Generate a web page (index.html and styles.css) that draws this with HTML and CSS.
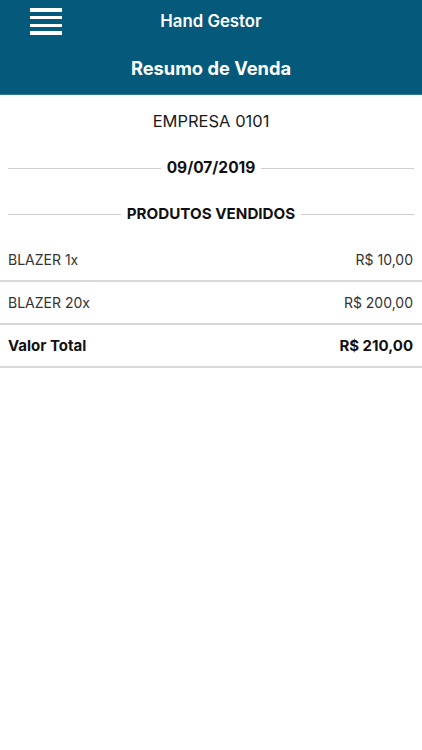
FILE: index.html
```html
<!DOCTYPE html>
<html lang="pt-BR">
<head>
    <meta charset="UTF-8">
    <meta name="viewport" content="width=device-width, initial-scale=1.0">
    <title>Resumo de Venda</title>
    <link rel="stylesheet" href="styles.css">
</head>
<body>
    <header class="header">
        <div class="topbar">
            <button class="menu-btn" aria-label="Menu">
                <span></span><span></span><span></span><span></span>
            </button>
            <div class="app-title">Hand Gestor</div>
            <div></div>
        </div>
        <h1 class="page-title">Resumo de Venda</h1>
    </header>

    <main class="summary">
        <div class="company">EMPRESA 0101</div>

        <div class="divider-title date">
            <span>09/07/2019</span>
        </div>

        <div class="divider-title products">
            <span>PRODUTOS VENDIDOS</span>
        </div>

        <ul class="items">
            <li class="item">
                <span>BLAZER 1x</span>
                <span>R$ 10,00</span>
            </li>
            <li class="item">
                <span>BLAZER 20x</span>
                <span>R$ 200,00</span>
            </li>
            <li class="item total">
                <span>Valor Total</span>
                <span>R$ 210,00</span>
            </li>
        </ul>
    </main>
</body>
</html>
```

FILE: styles.css
```css
:root {
    --header-bg: #05597b;
    --header-text: #ffffff;
    --text-color: #222;
    --item-text: #333;
    --line-color: #cfcfcf;
    --row-border: #d8d8d8;
}

body {
    margin: 0;
    font-family: Inter, 'Noto Sans', sans-serif;
    background-color: #fff;
    color: var(--text-color);
}

.header {
    background-color: var(--header-bg);
    color: var(--header-text);
    height: 95px;
    border-bottom: 1px solid #2d7895;
    box-sizing: border-box;
}

.topbar {
    display: grid;
    grid-template-columns: 1fr auto 1fr;
    align-items: center;
    height: 42px;
}

.menu-btn {
    display: flex;
    flex-direction: column;
    justify-content: space-between;
    width: 32px;
    height: 27px;
    margin-left: 30px;
    margin-top: 1px;
    padding: 0;
    background: none;
    border: none;
}

.menu-btn span {
    display: block;
    height: 3.5px;
    background-color: #fff;
}

.app-title {
    font-size: 16.8px;
    font-weight: 600;
}

.page-title {
    margin: 0;
    height: 52px;
    display: flex;
    align-items: center;
    justify-content: center;
    padding-bottom: 0;
    font-size: 18.3px;
    font-weight: 700;
}

.summary {
    padding-top: 16px;
}

.company {
    text-align: center;
    font-size: 16.5px;
    line-height: 20px;
    color: #1a1a1a;
}

.divider-title {
    display: flex;
    align-items: center;
    gap: 6px;
    padding: 0 8px;
    font-size: 15.5px;
    font-weight: 700;
    line-height: 20px;
    color: #111;
}

.divider-title::before,
.divider-title::after {
    content: "";
    flex: 1;
    height: 1px;
    background-color: var(--line-color);
}

.date {
    margin-top: 27px;
}

.products {
    margin-top: 26px;
    font-size: 15.2px;
}

.items {
    list-style: none;
    margin: 15px 0 0;
    padding: 0;
}

.item {
    display: flex;
    justify-content: space-between;
    align-items: center;
    height: 41px;
    padding: 0 9px 0 8px;
    border-bottom: 2px solid var(--row-border);
    font-size: 14px;
    color: var(--item-text);
}

.item.total {
    font-size: 15px;
    font-weight: 700;
    color: #111;
}
```
